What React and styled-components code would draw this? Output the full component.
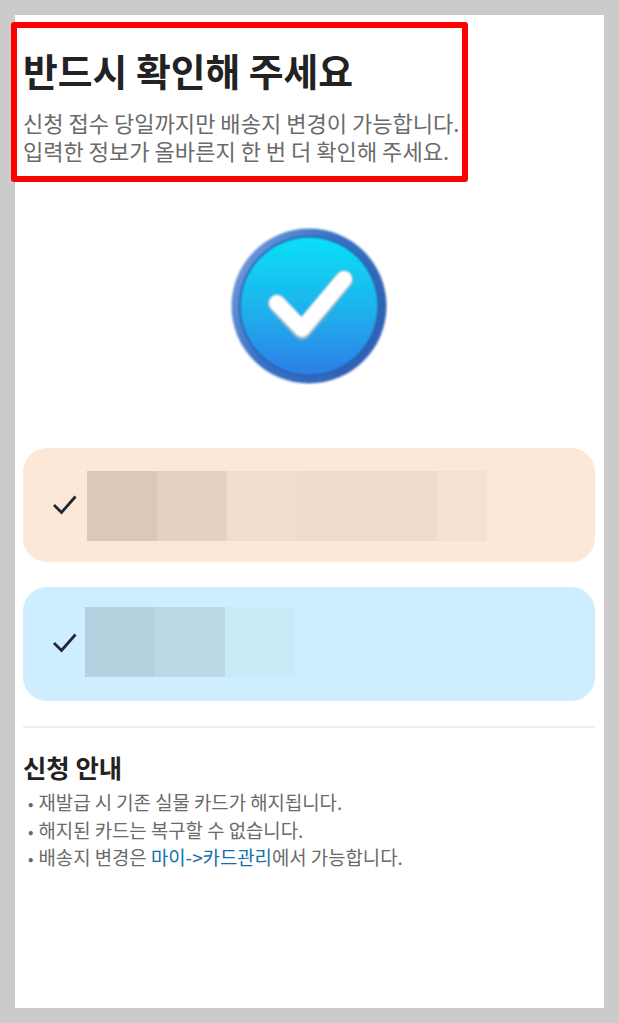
import React from "react";
import styled, { createGlobalStyle } from "styled-components";

const Global = createGlobalStyle`
  html, body { margin: 0; padding: 0; background: #cbcbcb; }
  body { font-family: "Noto Sans CJK KR", "Noto Sans", sans-serif; }
`;
const Frame = styled.div`
  box-sizing: border-box;
  width: 619px;
  height: 1023px;
  padding: 15px;
`;
const Page = styled.main`
  position: relative;
  box-sizing: border-box;
  width: 589px;
  height: 993px;
  background: #fff;
  padding: 0 9px 0 8px;
`;
const Highlight = styled.div`
  position: absolute;
  left: -4px;
  top: 7px;
  width: 457px;
  height: 160px;
  box-sizing: border-box;
  border: 6px solid #fe0000;
  border-radius: 3px;
`;
const Header = styled.header`
  padding-top: 29px;
`;
const Title = styled.h1`
  margin: 0;
  font-size: 37.8px;
  line-height: 52px;
  font-weight: 700;
  color: #222;
`;
const Lead = styled.p`
  margin: 12px 0 0;
  font-size: 22.05px;
  line-height: 28px;
  color: #6a6a6a;
  white-space: nowrap;
`;
const Hero = styled.div`
  display: flex;
  justify-content: center;
  margin-top: 63px;
`;
const Cards = styled.div`
  display: flex;
  flex-direction: column;
  gap: 25px;
  margin-top: 63px;
`;
const Card = styled.div`
  display: flex;
  height: 114px;
  box-sizing: border-box;
  padding: ${p => p.$top}px 0 0 ${p => p.$left}px;
  background: ${p => p.$bg};
  border-radius: 24px;
`;
const Tick = styled.svg`
  flex: none;
  width: 26px;
  height: 22px;
  margin-top: ${p => p.$mt}px;
  margin-right: ${p => p.$mr}px;
`;
const Mask = styled.div`
  display: flex;
  height: 70px;
`;
const Block = styled.div`
  height: 70px;
  width: ${p => p.$w}px;
  background: ${p => p.$c};
`;
const Divider = styled.hr`
  border: 0;
  height: 2px;
  margin: 25px 0 0;
  background: #eeeeee;
`;
const Notice = styled.section`
  margin-top: 23px;
`;
const NoticeTitle = styled.h2`
  margin: 0;
  font-size: 25.4px;
  line-height: 32px;
  font-weight: 700;
  color: #222;
`;
const NoticeList = styled.ul`
  list-style: none;
  margin: 5px 0 0;
  padding: 0 0 0 5px;
`;
const NoticeItem = styled.li`
  font-size: 18.85px;
  line-height: 27.5px;
  height: 27.5px;
  color: #6a6a6a;
  white-space: nowrap;
  &::before {
    content: "•";
    margin-right: 5px;
    font-size: 16px;
    line-height: 1;
  }
`;
const Accent = styled.span`
  color: #1272a8;
`;

const Badge = () => (
  <svg width="158" height="158" viewBox="0 0 158 158">
    <defs>
      <linearGradient id="face" x1="0" y1="0" x2="0" y2="1">
        <stop offset="0" stopColor="#0be0f6" />
        <stop offset="0.55" stopColor="#1fb0ec" />
        <stop offset="1" stopColor="#2e7fe6" />
      </linearGradient>
      <linearGradient id="rim" x1="0" y1="0" x2="1" y2="0.6">
        <stop offset="0" stopColor="#7ea4e0" />
        <stop offset="0.5" stopColor="#3a72c6" />
        <stop offset="1" stopColor="#2d62b4" />
      </linearGradient>
      <filter id="soft" x="-20%" y="-20%" width="140%" height="140%">
        <feGaussianBlur stdDeviation="1.2" />
      </filter>
      <filter id="edge" x="-5%" y="-5%" width="110%" height="110%">
        <feGaussianBlur stdDeviation="0.8" />
      </filter>
    </defs>
    <circle cx="79" cy="79" r="77.5" fill="url(#rim)" filter="url(#edge)" />
    <circle cx="79" cy="79" r="70" fill="#2a5fae" filter="url(#edge)" />
    <circle cx="79" cy="79" r="68.5" fill="url(#face)" filter="url(#edge)" />
    <path d="M47 77 L72 104 L114 53" fill="none" stroke="#8fb0c8" strokeWidth="18" strokeLinecap="round" strokeLinejoin="round" filter="url(#soft)" />
    <path d="M47 76 L72 102 L114 52" fill="none" stroke="#fff" strokeWidth="16" strokeLinecap="round" strokeLinejoin="round" filter="url(#soft)" />
  </svg>
);

const CheckMark = ({ mt, mr }) => (
  <Tick $mt={mt} $mr={mr} viewBox="0 0 26 22">
    <path d="M2 11 L9.5 18.5 L23.5 2.5" fill="none" stroke="#20262c" strokeWidth="2.8" />
  </Tick>
);

export default function App() {
  return (
    <Frame>
      <Global />
      <Page>
        <Highlight />
        <Header>
          <Title>반드시 확인해 주세요</Title>
          <Lead>
            신청 접수 당일까지만 배송지 변경이 가능합니다.
            <br />
            입력한 정보가 올바른지 한 번 더 확인해 주세요.
          </Lead>
        </Header>
        <Hero>
          <Badge />
        </Hero>
        <Cards>
          <Card $bg="#fde8d7" $top={23} $left={29}>
            <CheckMark mt={23} mr={9} />
            <Mask>
              <Block $w={70} $c="#dcc8b9" />
              <Block $w={70} $c="#e6d1c0" />
              <Block $w={70} $c="#f2ddcc" />
              <Block $w={140} $c="#f0dac9" />
              <Block $w={50} $c="#f6e1d0" />
            </Mask>
          </Card>
          <Card $bg="#ceeeff" $top={20} $left={29}>
            <CheckMark mt={25} mr={7} />
            <Mask>
              <Block $w={70} $c="#b3d1de" />
              <Block $w={70} $c="#bad8e6" />
              <Block $w={70} $c="#c9eaf7" />
            </Mask>
          </Card>
        </Cards>
        <Divider />
        <Notice>
          <NoticeTitle>신청 안내</NoticeTitle>
          <NoticeList>
            <NoticeItem>재발급 시 기존 실물 카드가 해지됩니다.</NoticeItem>
            <NoticeItem>해지된 카드는 복구할 수 없습니다.</NoticeItem>
            <NoticeItem>
              배송지 변경은 <Accent>마이-&gt;카드관리</Accent>에서 가능합니다.
            </NoticeItem>
          </NoticeList>
        </Notice>
      </Page>
    </Frame>
  );
}
